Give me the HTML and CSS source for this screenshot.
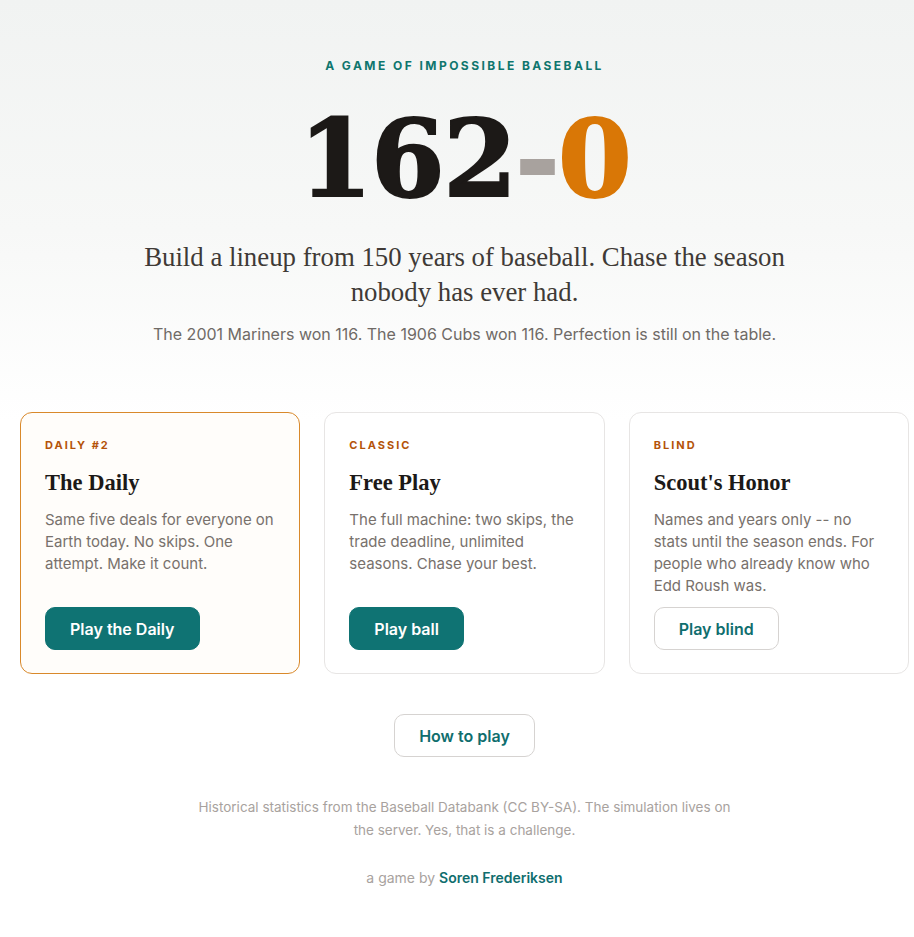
FILE: index.html
```html
<!DOCTYPE html>
<html lang="en">
<head>
<meta charset="utf-8">
<title>162-0</title>
<link rel="stylesheet" href="styles.css">
</head>
<body>
<main class="page">
  <header class="hero">
    <p class="eyebrow">A GAME OF IMPOSSIBLE BASEBALL</p>
    <h1 class="score"><span class="wins">162</span><span class="dash">-</span><span class="losses">0</span></h1>
    <p class="lede">Build a lineup from 150 years of baseball. Chase the season nobody has ever had.</p>
    <p class="sub">The 2001 Mariners won 116. The 1906 Cubs won 116. Perfection is still on the table.</p>
  </header>

  <section class="modes">
    <article class="card card-featured">
      <p class="tag">DAILY #2</p>
      <h2 class="card-title">The Daily</h2>
      <p class="card-text">Same five deals for everyone on Earth today. No skips. One attempt. Make it count.</p>
      <a class="btn btn-solid" href="#">Play the Daily</a>
    </article>
    <article class="card">
      <p class="tag">CLASSIC</p>
      <h2 class="card-title">Free Play</h2>
      <p class="card-text">The full machine: two skips, the trade deadline, unlimited seasons. Chase your best.</p>
      <a class="btn btn-solid" href="#">Play ball</a>
    </article>
    <article class="card">
      <p class="tag">BLIND</p>
      <h2 class="card-title">Scout's Honor</h2>
      <p class="card-text">Names and years only -- no stats until the season ends. For people who already know who Edd Roush was.</p>
      <a class="btn btn-outline" href="#">Play blind</a>
    </article>
  </section>

  <div class="howto">
    <a class="btn btn-outline" href="#">How to play</a>
  </div>

  <footer class="foot">
    <p class="credits">Historical statistics from the Baseball Databank (CC BY-SA). The simulation lives on the server. Yes, that is a challenge.</p>
    <p class="byline">a game by <a href="#">Soren Frederiksen</a></p>
  </footer>
</main>
</body>
</html>
```
FILE: styles.css
```css
* { box-sizing: border-box; }

html, body {
  margin: 0;
  padding: 0;
}

body {
  font-family: Inter, "Noto Sans", sans-serif;
  color: #1c1917;
  background: linear-gradient(180deg, #f1f3f2 0px, #f7f8f7 230px, #ffffff 420px, #ffffff 100%);
  min-height: 937px;
}

.page {
  padding: 0 5px 40px 20px;
}

.hero {
  text-align: center;
  padding-top: 58px;
}

.eyebrow {
  margin: 0;
  font-size: 12px;
  font-weight: 700;
  letter-spacing: 2.45px;
  color: #0f766e;
  line-height: 16px;
}

.score {
  margin: 26px 0 0;
  font-family: "DejaVu Serif", "Liberation Serif", serif;
  font-weight: 900;
  font-size: 106px;
  line-height: 118px;
  letter-spacing: -1.5px;
  -webkit-text-stroke: 2px currentColor;
}

.wins { color: #1c1917; }
.dash { color: #a8a29e; }
.losses { color: #d97706; }

.lede {
  margin: 22px auto 0;
  max-width: 680px;
  font-family: "Liberation Serif", serif;
  font-size: 26.8px;
  line-height: 35px;
  color: #3f3a36;
}

.sub {
  margin: 12px 0 0;
  font-size: 16px;
  line-height: 24px;
  color: #6f6a66;
}

.modes {
  margin-top: 66px;
  display: grid;
  grid-template-columns: repeat(3, 1fr);
  gap: 24px;
}

.card {
  display: flex;
  flex-direction: column;
  align-items: flex-start;
  background: #ffffff;
  border: 1px solid #e7e5e4;
  border-radius: 12px;
  padding: 24px 24px 23px;
}

.card-featured {
  border-color: #d9892b;
  background: #fffdfa;
}

.tag {
  margin: 0;
  font-size: 11px;
  font-weight: 700;
  letter-spacing: 2px;
  line-height: 16px;
  color: #b45309;
}

.card-title {
  margin: 16px 0 0;
  font-family: "Liberation Serif", serif;
  font-weight: 700;
  font-size: 22.5px;
  line-height: 28px;
  color: #1c1917;
}

.card-text {
  margin: 12px 0 10px;
  font-size: 15px;
  line-height: 22px;
  color: #78716c;
}

.card .btn {
  margin-top: auto;
}

.btn {
  display: inline-flex;
  align-items: center;
  justify-content: center;
  height: 43px;
  padding: 0 24px;
  border-radius: 10px;
  font-size: 16px;
  font-weight: 600;
  text-decoration: none;
  white-space: nowrap;
}

.btn-solid {
  background: #0f7373;
  color: #ffffff;
  border: 1px solid #0f7373;
}

.btn-outline {
  background: #ffffff;
  color: #0f6e6e;
  border: 1px solid #d6d3d1;
}

.howto {
  margin-top: 40px;
  text-align: center;
}

.foot {
  text-align: center;
  margin-top: 39px;
}

.credits {
  margin: 0 auto;
  max-width: 540px;
  font-size: 13.5px;
  line-height: 23px;
  color: #a8a29e;
}

.byline {
  margin: 26px 0 0;
  font-size: 14px;
  line-height: 20px;
  color: #a8a29e;
}

.byline a {
  color: #0f6e6e;
  font-weight: 600;
  text-decoration: none;
}
```
